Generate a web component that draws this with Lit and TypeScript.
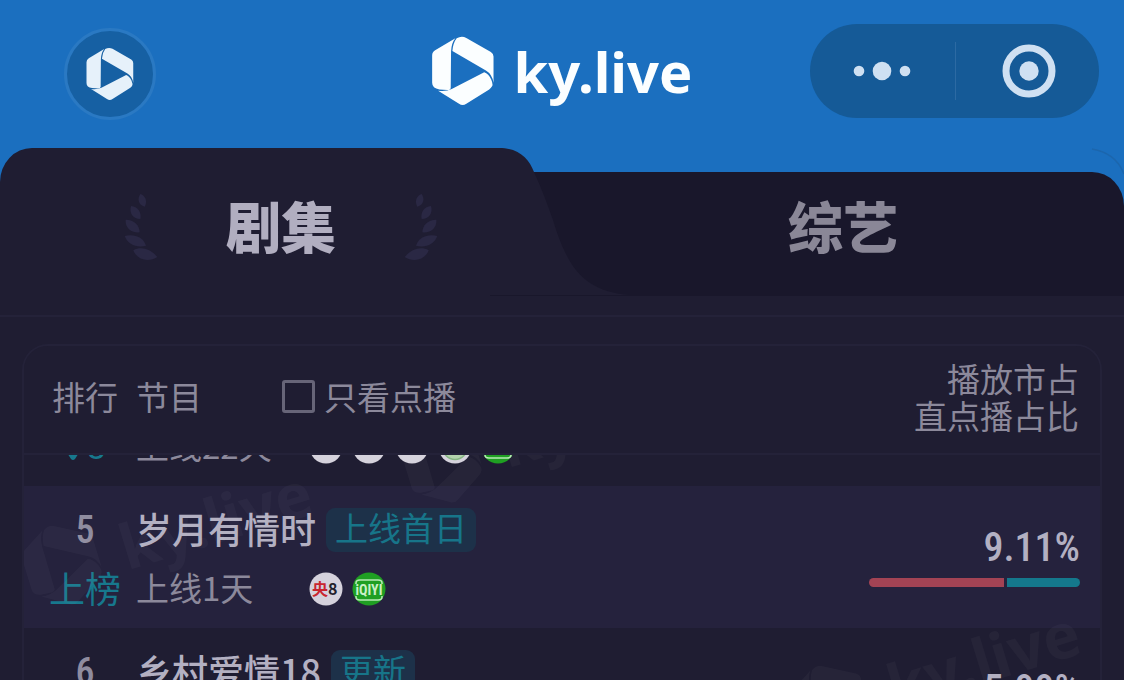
import { LitElement, html, css, svg, nothing } from "lit";
import { customElement, property, state } from "lit/decorators.js";

interface Show {
  rank: number;
  title?: string;
  tag?: string;
  change?: string;
  drop?: number;
  online?: string;
  channels: string[];
  share?: string;
  live: number;
}

const shows: Show[] = [
  { rank: 4, drop: 3, online: "上线22天", channels: ["plain", "plain", "plain", "ring", "iqiyi"], live: 0 },
  { rank: 5, title: "岁月有情时", tag: "上线首日", change: "上榜", online: "上线1天", channels: ["cctv8", "iqiyi"], share: "9.11%", live: 64 },
  { rank: 6, title: "乡村爱情18", tag: "更新", channels: [], share: "5.99%", live: 60 },
];

@customElement("ky-mark")
export class KyMark extends LitElement {
  static styles = css`
    :host { display: block; }
    svg { display: block; width: 100%; height: 100%; fill: currentColor; }
  `;
  render() {
    return html`<svg viewBox="66 53 190 211" aria-hidden="true">
      <path d="M68 112Q68 101 77 96L138 60Q126 74 125 100L124 209Q124 216 114 216L90 214Q68 211 68 194Z" />
      <path d="M129 98Q131 74 142 60Q157 51 171 59L245 101Q253 106 253 115V194Q249 168 230 157Z" />
      <path d="M86 218Q110 221 127 213L225 162Q238 166 246 184Q252 198 249 204Q246 210 240 214L171 257Q160 265 149 257Z" />
    </svg>`;
  }
}

@customElement("channel-badge")
export class ChannelBadge extends LitElement {
  @property() kind = "plain";
  static styles = css`
    :host { display: block; width: 34px; height: 34px; }
    svg { display: block; width: 34px; height: 34px; }
    text { font-family: "Noto Sans CJK SC", sans-serif; font-weight: 700; }
    .cn { font-size: 16px; fill: #c9262f; }
    .num { font-size: 16px; fill: #22212b; }
    .qiyi { font-family: "Roboto Condensed", "Roboto", sans-serif; font-size: 14px; fill: #c9f0c6; }
  `;
  render() {
    const green = this.kind === "iqiyi";
    return html`<svg viewBox="0 0 34 34" aria-hidden="true">
      <circle cx="17" cy="17" r="16.5" fill=${green ? "#1f9f22" : "#d5d2dc"} />
      ${this.kind === "ring"
        ? svg`<circle cx="17" cy="17" r="12.5" fill="#b3d2ac" stroke="#86b583" stroke-width="1.500" />`
        : nothing}
      ${this.kind === "cctv8"
        ? svg`<text class="cn" x="3" y="23">央</text><text class="num" x="19" y="23">8</text>`
        : nothing}
      ${green
        ? svg`<path d="M4 12V11Q4 8 8 8H26Q30 8 30 11V12M4 24V25Q4 28 8 28H26Q30 28 30 25V24" fill="none" stroke="#b8eab5" stroke-width="1.500" />
            <text class="qiyi" x="17" y="23" text-anchor="middle">iQIYI</text>`
        : nothing}
    </svg>`;
  }
}

@customElement("app-root")
export class AppRoot extends LitElement {
  @state() private tab = 0;
  @state() private onDemand = false;

  static styles = css`
    :host {
      display: flex;
      flex-direction: column;
      height: 100vh;
      overflow: hidden;
      background: #1f1d32;
      color: #8c899b;
      font-family: "Noto Sans CJK SC", sans-serif;
      font-size: 33px;
    }
    * { box-sizing: border-box; }
    button { margin: 0; padding: 0; border: 0; background: none; font: inherit; color: inherit; cursor: pointer; }

    .bar {
      flex: none;
      display: grid;
      grid-template-columns: 1fr auto 1fr;
      align-items: center;
      height: 148px;
      padding: 0 25px 6px;
      background: #1b6fbf;
    }
    .home {
      display: grid;
      place-items: center;
      width: 92px;
      height: 92px;
      margin: 6px 0 0 39px;
      border: 3px solid #2a79c3;
      border-radius: 50%;
      background: #1660a3;
      color: #e6f1fa;
    }
    .home ky-mark { width: 48px; height: 54px; }
    .brand { display: flex; align-items: center; gap: 18px; color: #fbfeff; }
    .brand ky-mark { width: 64px; height: 70px; }
    .brand-name { font: 700 56px/70px "Noto Sans", sans-serif; }
    .capsule {
      justify-self: end;
      display: grid;
      grid-template-columns: 1fr 1fr;
      align-items: center;
      width: 289px;
      height: 94px;
      border-radius: 47px;
      background: #155a97;
      color: #cfe0f2;
    }
    .capsule button { display: grid; place-items: center; height: 58px; }
    .capsule button + button { border-left: 1px solid #2c6aa3; }
    .capsule svg { display: block; width: 58px; height: 56px; fill: currentColor; }

    .tabs {
      flex: none;
      position: relative;
      display: grid;
      grid-template-columns: 1fr 1fr;
      height: 148px;
      background: #1b6fbf;
    }
    .tabs-shape { position: absolute; inset: 0; width: 100%; height: 100%; }
    .tab {
      position: relative;
      display: flex;
      align-items: center;
      justify-content: center;
      gap: 68px;
      padding-top: 10px;
      font-size: 55px;
      line-height: 80px;
      font-weight: 900;
      color: #8a8797;
    }
    .tab span { padding-bottom: 6px; }
    .tab.on { color: #b1aec0; }
    .laurel { display: block; width: 34px; height: 68px; fill: #2a2844; }
    .laurel.flip { transform: scaleX(-1); }

    .rule { flex: none; height: 2px; margin: 19px 0 27px; background: #242239; }

    .panel {
      flex: 1;
      min-height: 0;
      margin: 0 22px;
      border: 2px solid #242239;
      border-bottom: 0;
      border-radius: 26px 26px 0 0;
      overflow: hidden;
    }
    .scroller { position: relative; height: 100%; overflow: hidden auto; scrollbar-width: none; }
    table { width: 100%; table-layout: fixed; border-collapse: separate; border-spacing: 0; }
    .col-rank { width: 112px; }
    .col-share { width: 260px; }
    th {
      position: sticky;
      top: 0;
      z-index: 2;
      height: 109px;
      padding: 0 0 6px;
      border-bottom: 2px solid #242239;
      background: #1f1d32;
      font-weight: 400;
      line-height: 37px;
      text-align: left;
    }
    th.rank { padding-left: 10px; text-align: center; }
    th.share { padding-right: 21px; text-align: right; }
    .head { display: flex; align-items: center; gap: 80px; }
    .filter { display: flex; align-items: center; gap: 9px; cursor: pointer; }
    .filter input {
      appearance: none;
      width: 33px;
      height: 33px;
      margin: 0;
      border: 3px solid #676578;
      border-radius: 3px;
    }
    .filter input:checked { background: #157e94; }

    td { height: 142px; padding: 22px 0 0; vertical-align: top; }
    .odd td { background: #25223d; }
    .line { display: flex; align-items: center; height: 44px; gap: 10px; }
    .line.sub { height: 40px; margin-top: 17px; gap: 9px; }
    td.rank .line { justify-content: center; padding-left: 10px; }
    td.rank .line.sub { gap: 5px; }
    .num, .pct { font-family: "Roboto Condensed", "Roboto", sans-serif; font-weight: 500; }
    .num { font-size: 38px; color: #8f8c9f; }
    .change, .title, .online { line-height: 40px; padding-bottom: 5px; white-space: nowrap; }
    .change { font-size: 36px; color: #17788d; }
    .drop { font-family: "Roboto", sans-serif; font-size: 34px; color: #17788d; }
    .arrow { width: 18px; height: 26px; fill: #17788d; }
    .title { font-size: 36px; font-weight: 500; color: #b3b0c2; }
    .tag {
      height: 44px;
      padding: 0 9px;
      border-radius: 9px;
      background: #1d3149;
      color: #177589;
      line-height: 38px;
      white-space: nowrap;
    }
    .online { min-width: 164px; color: #8c899b; }
    td.share { padding: 38px 20px 0 0; }
    .pct { font-size: 40px; line-height: 48px; text-align: right; color: #b3b0c2; }
    .meter { display: flex; gap: 3px; width: 211px; height: 9px; margin: 6px 0 0 auto; border-radius: 5px; overflow: hidden; }
    .meter-live { background: #a34354; }
    .meter-demand { flex: 1; background: #14788c; }

    .mark {
      position: absolute;
      z-index: 1;
      display: flex;
      align-items: center;
      gap: 22px;
      color: rgba(255, 255, 255, 0.03);
      transform: rotate(-17deg);
      pointer-events: none;
      font: 700 62px/80px "Noto Sans", sans-serif;
    }
    .mark ky-mark { width: 76px; height: 84px; }
    .mark.a { left: -4px; top: 256px; }
    .mark.b { left: 376px; top: 154px; }
    .mark.c { left: 764px; top: 396px; }
  `;

  firstUpdated() {
    const scroller = this.renderRoot.querySelector(".scroller");
    if (scroller) scroller.scrollTop = 111;
  }

  private laurel(flip = false) {
    return html`<svg class="laurel ${flip ? "flip" : ""}" viewBox="369 160 102 204" aria-hidden="true">
      <path d="M418 163C434 168 440 186 431 201C412 196 408 178 418 163Z" />
      <path d="M390 199C410 201 422 217 418 238C396 238 384 220 390 199Z" />
      <path d="M374 240C400 241 415 256 416 278C390 280 372 264 374 240Z" />
      <path d="M371 289C400 282 426 292 435 318C408 326 380 314 371 289Z" />
      <path d="M397 332C422 318 450 330 469 352C444 368 408 362 397 332Z" />
    </svg>`;
  }

  private row(s: Show) {
    return html`<tr class=${s.rank % 2 ? "odd" : ""}>
      <td class="rank">
        <div class="line">${s.title ? html`<span class="num">${s.rank}</span>` : nothing}</div>
        ${s.change ? html`<div class="line sub"><span class="change">${s.change}</span></div>` : nothing}
        ${s.drop
          ? html`<div class="line sub">
              <svg class="arrow" viewBox="0 0 18 26" aria-hidden="true"><path d="M6 0h6v14h6L11 25q-2 2-4 0L0 14h6z" /></svg>
              <span class="drop">${s.drop}</span>
            </div>`
          : nothing}
      </td>
      <td>
        <div class="line">
          ${s.title ? html`<span class="title">${s.title}</span>` : nothing}
          ${s.tag ? html`<span class="tag">${s.tag}</span>` : nothing}
        </div>
        ${s.online
          ? html`<div class="line sub">
              <span class="online">${s.online}</span>
              ${s.channels.map((c) => html`<channel-badge .kind=${c}></channel-badge>`)}
            </div>`
          : nothing}
      </td>
      <td class="share">
        ${s.share
          ? html`<div class="pct">${s.share}</div>
              <div class="meter">
                <div class="meter-live" style="width:${s.live}%"></div>
                <div class="meter-demand"></div>
              </div>`
          : nothing}
      </td>
    </tr>`;
  }

  render() {
    return html`
      <header class="bar">
        <button class="home" aria-label="ky.live"><ky-mark></ky-mark></button>
        <div class="brand"><ky-mark></ky-mark><span class="brand-name">ky.live</span></div>
        <div class="capsule">
          <button aria-label="更多">
            <svg viewBox="0 0 58 56"><circle cx="6" cy="28" r="5.3" /><circle cx="29" cy="28" r="9.3" /><circle cx="52" cy="28" r="5.3" /></svg>
          </button>
          <button aria-label="关闭">
            <svg viewBox="0 0 58 56">
              <circle cx="31" cy="28" r="23" fill="none" stroke="currentColor" stroke-width="7" />
              <circle cx="31" cy="28" r="9.7" />
            </svg>
          </button>
        </div>
      </header>

      <div class="tabs" role="tablist">
        <svg class="tabs-shape" viewBox="0 0 1124 148" preserveAspectRatio="none" aria-hidden="true">
          <path d="M1092 1Q1116 5 1124 26" fill="none" stroke="#1c66ad" stroke-width="1.5" />
          <path d="M480 24H1092A32 34 0 0 1 1124 58V148H480Z" fill="#19172b" />
          <path d="M0 34A32 34 0 0 1 32 0H499C519 0 529 11 534 24C541 39 547 55 553 72C558 88 561 96 566 106C578 131 598 145 630 147L490 148H0Z" fill="#1f1d32" />
          <path d="M490 147.500H630" stroke="#19172b" stroke-width="1" />
        </svg>
        <button class="tab on" role="tab" aria-selected=${this.tab === 0} @click=${() => (this.tab = 0)}>
          ${this.laurel()}<span>剧集</span>${this.laurel(true)}
        </button>
        <button class="tab" role="tab" aria-selected=${this.tab === 1} @click=${() => (this.tab = 1)}>
          <span>综艺</span>
        </button>
      </div>

      <div class="rule"></div>

      <section class="panel">
        <div class="scroller">
          <table>
            <colgroup><col class="col-rank" /><col /><col class="col-share" /></colgroup>
            <thead>
              <tr>
                <th class="rank" scope="col">排行</th>
                <th scope="col">
                  <div class="head">
                    <span>节目</span>
                    <label class="filter">
                      <input type="checkbox" .checked=${this.onDemand} @change=${() => (this.onDemand = !this.onDemand)} />
                      <span>只看点播</span>
                    </label>
                  </div>
                </th>
                <th class="share" scope="col">播放市占<br />直点播占比</th>
              </tr>
            </thead>
            <tbody>
              ${shows.map((s) => this.row(s))}
            </tbody>
          </table>
          ${["a", "b", "c"].map(
            (k) => html`<div class="mark ${k}" aria-hidden="true"><ky-mark></ky-mark><span>ky.live</span></div>`
          )}
        </div>
      </section>
    `;
  }
}
